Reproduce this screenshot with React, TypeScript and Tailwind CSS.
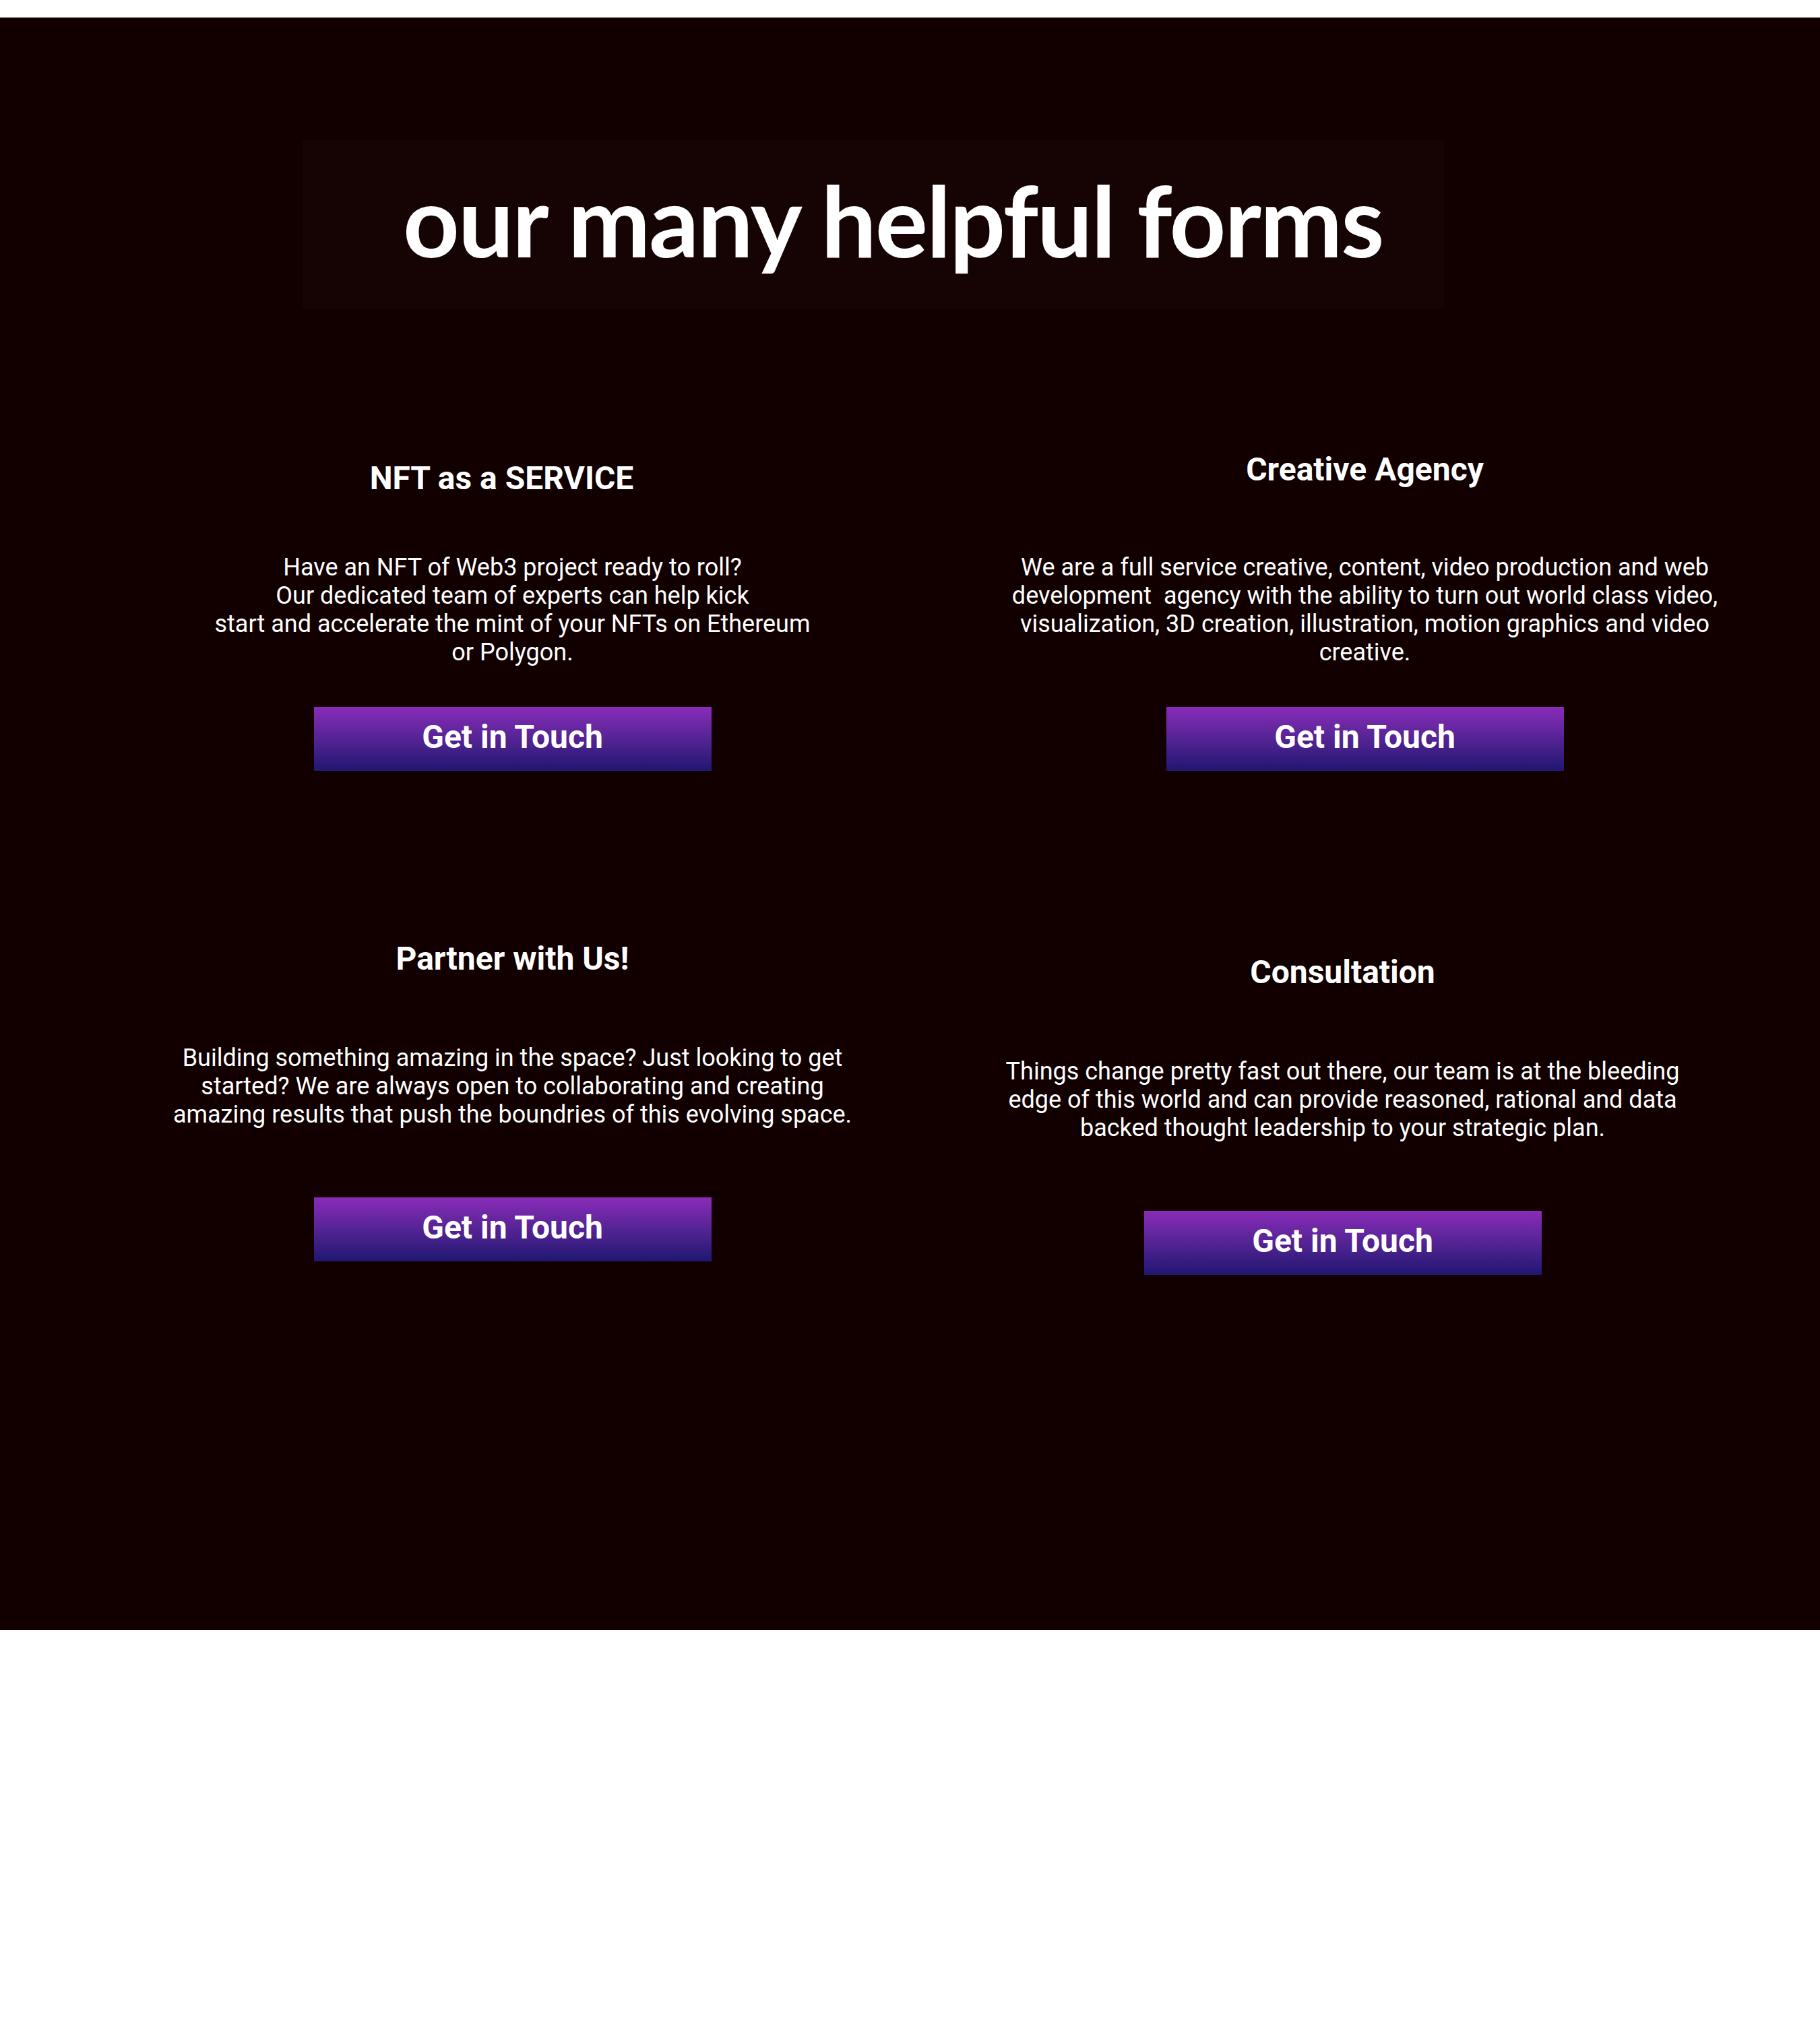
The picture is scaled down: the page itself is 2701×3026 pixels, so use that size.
import React from 'react';

type Card = {
  id: number;
  title: string;
  lines: React.ReactNode[];
  wrap: string;
  titleClass: string;
  textClass: string;
  buttonClass: string;
};

const cards: Card[] = [
  {
    id: 1,
    title: 'NFT as a SERVICE',
    lines: [
      'Have an NFT of Web3 project ready to roll?',
      'Our dedicated team of experts can help kick',
      'start and accelerate the mint of your NFTs on Ethereum',
      'or Polygon.',
    ],
    wrap: 'pt-[13px]',
    titleClass: 'pr-[32px]',
    textClass: 'mt-[87px]',
    buttonClass: 'mt-[60px]',
  },
  {
    id: 2,
    title: 'Creative Agency',
    lines: [
      'We are a full service creative, content, video production and web',
      'development\u00a0 agency with the ability to turn out world class video,',
      'visualization, 3D creation, illustration, motion graphics and video',
      'creative.',
    ],
    wrap: '',
    titleClass: '',
    textClass: 'mt-[100px]',
    buttonClass: 'mt-[60px]',
  },
  {
    id: 3,
    title: 'Partner with Us!',
    lines: [
      'Building something amazing in the space? Just looking to get',
      'started? We are always open to collaborating and creating',
      'amazing results that push the boundries of this evolving space.',
    ],
    wrap: '',
    titleClass: '',
    textClass: 'mt-[102px]',
    buttonClass: 'mt-[102px]',
  },
  {
    id: 4,
    title: 'Consultation',
    lines: [
      'Things change pretty fast out there, our team is at the bleeding',
      'edge of this world and can provide reasoned, rational and data',
      'backed thought leadership to your strategic plan.',
    ],
    wrap: 'pt-[20px] mr-[66px]',
    titleClass: '',
    textClass: 'mt-[102px]',
    buttonClass: 'mt-[102px]',
  },
];

function ServiceCard({ card }: { card: Card }) {
  return (
    <div className={`flex flex-col items-center text-center text-white ${card.wrap}`}>
      <h2 className={`w-full text-[48px] leading-none font-bold ${card.titleClass}`}>{card.title}</h2>
      <p className={`whitespace-nowrap text-[36px] leading-[42px] ${card.textClass}`}>
        {card.lines.map((line, i) => (
          <React.Fragment key={i}>
            {line}
            {i < card.lines.length - 1 && <br />}
          </React.Fragment>
        ))}
      </p>
      <button
        className={`flex h-[95px] w-[590px] items-center justify-center bg-gradient-to-b from-[#8a2bb9] to-[#201670] pb-[6px] text-[48px] font-bold text-white ${card.buttonClass}`}
      >
        Get in Touch
      </button>
    </div>
  );
}

function App() {
  return (
    <div className="min-h-[3026px] bg-white pt-[26px] font-['Roboto',sans-serif]">
      <section className="h-[2393px] bg-[#120000] pt-[182px]">
        <div className="ml-[449px] h-[250px] w-[1694px] bg-[#160404] pt-[45px] pl-[149px]">
          <h1 className="font-['Lato',sans-serif] text-[146px] leading-none font-bold tracking-[-2px] text-white">
            our many helpful forms
          </h1>
        </div>

        <div className="mt-[215px] grid w-[2658px] grid-cols-2 items-start gap-y-[255px] pl-[128px]">
          {cards.map((card) => (
            <ServiceCard key={card.id} card={card} />
          ))}
        </div>
      </section>
    </div>
  );
}

export default App;
